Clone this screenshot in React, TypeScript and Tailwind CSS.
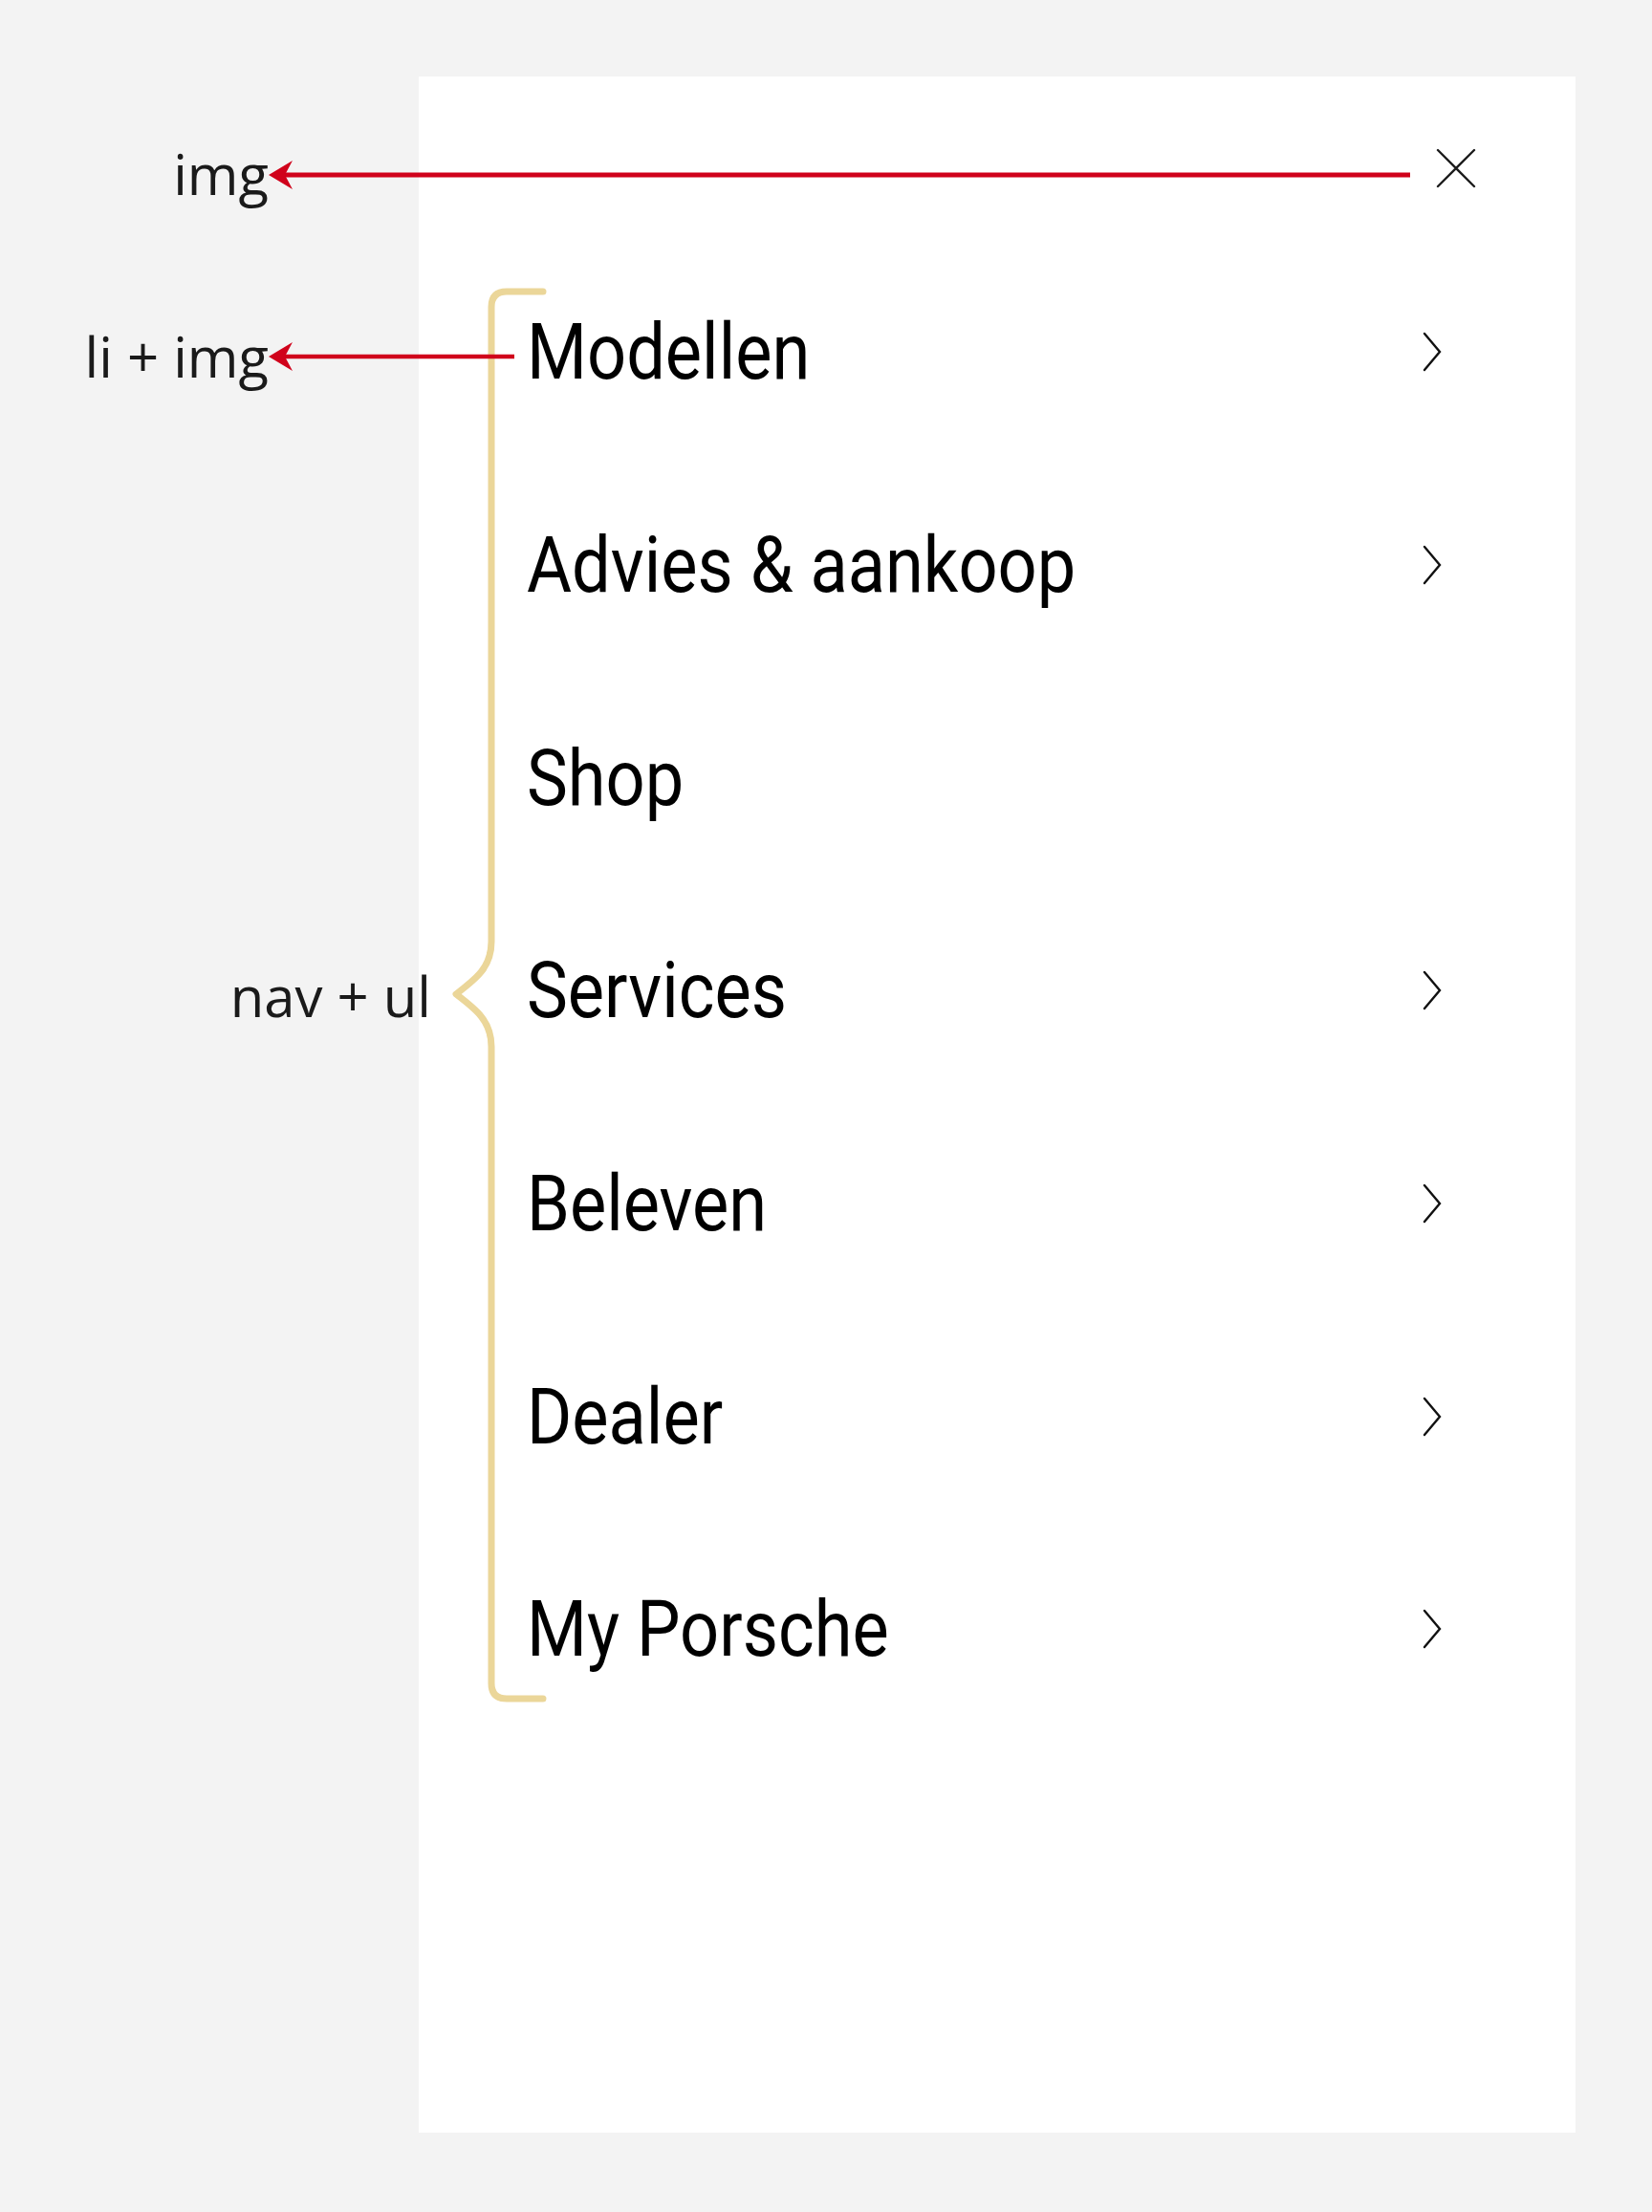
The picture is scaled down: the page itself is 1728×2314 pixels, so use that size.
import { ReactNode } from "react";

const menuItems: { label: string; hasChildren: boolean }[] = [
  { label: "Modellen", hasChildren: true },
  { label: "Advies & aankoop", hasChildren: true },
  { label: "Shop", hasChildren: false },
  { label: "Services", hasChildren: true },
  { label: "Beleven", hasChildren: true },
  { label: "Dealer", hasChildren: true },
  { label: "My Porsche", hasChildren: true },
];

const CloseIcon = () => (
  <svg width="48" height="48" viewBox="0 0 48 48" fill="none" aria-hidden>
    <path
      d="M5 5 L43 43 M43 5 L5 43"
      stroke="#1c1c1c"
      strokeWidth="2.4"
      strokeLinecap="round"
    />
  </svg>
);

const ChevronIcon = () => (
  <svg width="24" height="44" viewBox="0 0 24 44" fill="none" aria-hidden>
    <path
      d="M4 3 L20 22 L4 41"
      stroke="#111"
      strokeWidth="2.4"
      strokeLinecap="round"
      strokeLinejoin="miter"
    />
  </svg>
);

const Label = ({ children, className }: { children: ReactNode; className: string }) => (
  <div
    className={`absolute text-right text-[58px] leading-none text-[#1a1a1a] whitespace-nowrap font-['Open_Sans',sans-serif] ${className}`}
  >
    {children}
  </div>
);

export default function App() {
  return (
    <div className="relative w-[1728px] h-[2314px] overflow-hidden bg-[#f3f3f3] pt-[80px] pl-[438px]">
      <aside className="w-[1210px] h-[2151px] bg-white">
        <div className="flex justify-end pt-[72px] pr-[101px]">
          <button type="button" aria-label="Sluiten" className="h-12 w-12">
            <CloseIcon />
          </button>
        </div>

        <nav className="mt-[57px]">
          <ul className="flex flex-col">
            {menuItems.map((item) => (
              <li
                key={item.label}
                className="flex h-[222.67px] items-center justify-between pl-[113px] pr-[138px]"
              >
                <span className="inline-block origin-left scale-x-[0.88] whitespace-nowrap text-[82px] leading-none font-normal text-black font-['Roboto',sans-serif]">
                  {item.label}
                </span>
                {item.hasChildren && <ChevronIcon />}
              </li>
            ))}
          </ul>
        </nav>
      </aside>

      {/* annotations */}
      <Label className="top-[153px] right-[1447px]">img</Label>
      <Label className="top-[344px] right-[1447px]">li + img</Label>
      <Label className="top-[1013px] right-[1277px]">nav + ul</Label>

      <svg
        className="pointer-events-none absolute left-0 top-0"
        width="1728"
        height="2314"
        viewBox="0 0 1728 2314"
        fill="none"
        aria-hidden
      >
        <path
          d="M568 305 H530 Q514 305 514 321 V985 C514 1012 498 1024 477 1040 C498 1056 514 1068 514 1095 V1761 Q514 1777 530 1777 H568"
          stroke="#ebd699"
          strokeWidth="7"
          strokeLinecap="round"
          strokeLinejoin="round"
        />
        <line x1="296" y1="183" x2="1475" y2="183" stroke="#d0021b" strokeWidth="5" />
        <path d="M281 183 L306 168 L298 183 L306 198 Z" fill="#d0021b" />
        <line x1="296" y1="373" x2="538" y2="373" stroke="#d0021b" strokeWidth="4.5" />
        <path d="M281 373 L306 358 L298 373 L306 388 Z" fill="#d0021b" />
      </svg>
    </div>
  );
}
